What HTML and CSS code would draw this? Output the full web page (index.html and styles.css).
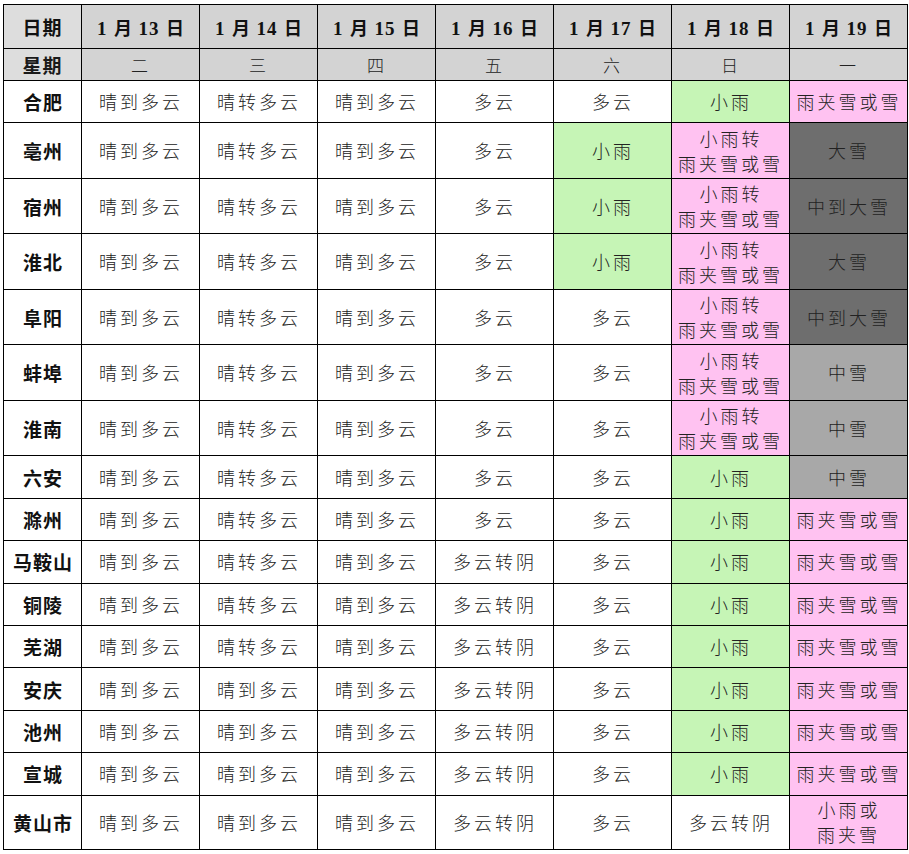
FILE: index.html
```html
<!DOCTYPE html>
<html lang="zh">
<head>
<meta charset="utf-8">
<link rel="stylesheet" href="styles.css">
</head>
<body>
<table class="wx">
  <colgroup>
    <col class="c-city">
    <col><col><col><col><col><col><col>
  </colgroup>
  <thead>
    <tr class="r-date">
      <th class="lbl">日期</th>
      <th><span class="n">1</span> 月 <span class="n">13</span> 日</th>
      <th><span class="n">1</span> 月 <span class="n">14</span> 日</th>
      <th><span class="n">1</span> 月 <span class="n">15</span> 日</th>
      <th><span class="n">1</span> 月 <span class="n">16</span> 日</th>
      <th><span class="n">1</span> 月 <span class="n">17</span> 日</th>
      <th><span class="n">1</span> 月 <span class="n">18</span> 日</th>
      <th><span class="n">1</span> 月 <span class="n">19</span> 日</th>
    </tr>
    <tr class="r-week">
      <th class="lbl">星期</th>
      <td>二</td><td>三</td><td>四</td><td>五</td><td>六</td><td>日</td><td>一</td>
    </tr>
  </thead>
  <tbody>
    <tr class="s"><th>合肥</th><td>晴到多云</td><td>晴转多云</td><td>晴到多云</td><td>多云</td><td>多云</td><td class="g">小雨</td><td class="p">雨夹雪或雪</td></tr>
    <tr class="d"><th>亳州</th><td>晴到多云</td><td>晴转多云</td><td>晴到多云</td><td>多云</td><td class="g">小雨</td><td class="p">小雨转<br>雨夹雪或雪</td><td class="dk">大雪</td></tr>
    <tr class="d"><th>宿州</th><td>晴到多云</td><td>晴转多云</td><td>晴到多云</td><td>多云</td><td class="g">小雨</td><td class="p">小雨转<br>雨夹雪或雪</td><td class="dk">中到大雪</td></tr>
    <tr class="d"><th>淮北</th><td>晴到多云</td><td>晴转多云</td><td>晴到多云</td><td>多云</td><td class="g">小雨</td><td class="p">小雨转<br>雨夹雪或雪</td><td class="dk">大雪</td></tr>
    <tr class="d"><th>阜阳</th><td>晴到多云</td><td>晴转多云</td><td>晴到多云</td><td>多云</td><td>多云</td><td class="p">小雨转<br>雨夹雪或雪</td><td class="dk">中到大雪</td></tr>
    <tr class="d"><th>蚌埠</th><td>晴到多云</td><td>晴转多云</td><td>晴到多云</td><td>多云</td><td>多云</td><td class="p">小雨转<br>雨夹雪或雪</td><td class="md">中雪</td></tr>
    <tr class="d"><th>淮南</th><td>晴到多云</td><td>晴转多云</td><td>晴到多云</td><td>多云</td><td>多云</td><td class="p">小雨转<br>雨夹雪或雪</td><td class="md">中雪</td></tr>
    <tr class="s"><th>六安</th><td>晴到多云</td><td>晴转多云</td><td>晴到多云</td><td>多云</td><td>多云</td><td class="g">小雨</td><td class="md">中雪</td></tr>
    <tr class="s"><th>滁州</th><td>晴到多云</td><td>晴转多云</td><td>晴到多云</td><td>多云</td><td>多云</td><td class="g">小雨</td><td class="p">雨夹雪或雪</td></tr>
    <tr class="s"><th>马鞍山</th><td>晴到多云</td><td>晴转多云</td><td>晴到多云</td><td>多云转阴</td><td>多云</td><td class="g">小雨</td><td class="p">雨夹雪或雪</td></tr>
    <tr class="s"><th>铜陵</th><td>晴到多云</td><td>晴转多云</td><td>晴到多云</td><td>多云转阴</td><td>多云</td><td class="g">小雨</td><td class="p">雨夹雪或雪</td></tr>
    <tr class="s"><th>芜湖</th><td>晴到多云</td><td>晴转多云</td><td>晴到多云</td><td>多云转阴</td><td>多云</td><td class="g">小雨</td><td class="p">雨夹雪或雪</td></tr>
    <tr class="s"><th>安庆</th><td>晴到多云</td><td>晴到多云</td><td>晴到多云</td><td>多云转阴</td><td>多云</td><td class="g">小雨</td><td class="p">雨夹雪或雪</td></tr>
    <tr class="s"><th>池州</th><td>晴到多云</td><td>晴到多云</td><td>晴到多云</td><td>多云转阴</td><td>多云</td><td class="g">小雨</td><td class="p">雨夹雪或雪</td></tr>
    <tr class="s"><th>宣城</th><td>晴到多云</td><td>晴到多云</td><td>晴到多云</td><td>多云转阴</td><td>多云</td><td class="g">小雨</td><td class="p">雨夹雪或雪</td></tr>
    <tr class="l"><th>黄山市</th><td>晴到多云</td><td>晴到多云</td><td>晴到多云</td><td>多云转阴</td><td>多云</td><td>多云转阴</td><td class="p">小雨或<br>雨夹雪</td></tr>
  </tbody>
</table>
</body>
</html>
```

FILE: styles.css
```css
html, body {
  margin: 0;
  padding: 0;
  background: #ffffff;
}

body {
  padding: 4px 0 0 3px;
  font-family: "Noto Sans CJK SC", "Noto Sans", sans-serif;
  color: #1a1a1a;
}

.wx {
  border-collapse: collapse;
  table-layout: fixed;
  width: 903px;
}

.wx col { width: 118px; }
.wx col.c-city { width: 78px; }

.wx th,
.wx td {
  border: 1px solid #000;
  padding: 0;
  text-align: center;
  vertical-align: middle;
  overflow: hidden;
  white-space: nowrap;
}

.wx td {
  font-size: 18px;
  font-weight: 300;
  letter-spacing: 3px;
  text-indent: 1px;
  line-height: 25px;
  color: #222;
}

.wx tbody th {
  font-size: 19px;
  font-weight: 700;
  letter-spacing: 1px;
  text-indent: 1px;
  color: #111;
}

.r-date { height: 44px; }
.r-week { height: 32px; }

.r-date th {
  background: #d3d3d3;
  font-family: "Liberation Serif", "Noto Sans CJK SC", serif;
  font-size: 18px;
  font-weight: 700;
  word-spacing: 2px;
  color: #111;
}

.r-date th .n {
  font-family: "Liberation Serif", serif;
  font-size: 19px;
  letter-spacing: 1px;
}

.r-week td {
  background: #d3d3d3;
  font-size: 17px;
  line-height: 20px;
}

.wx thead th.lbl {
  background: #dddddd;
  font-family: "Noto Sans CJK SC", sans-serif;
  font-size: 19px;
  font-weight: 700;
  letter-spacing: 1px;
  word-spacing: 0;
}

.s { height: 42.4px; }
.d { height: 55.5px; }
.l { height: 54px; }

.g { background: #c6f5b6; }
.p { background: #ffc2f1; }
.dk { background: #6e6e6e; color: #2a2a2a; }
.md { background: #a8a8a8; color: #2a2a2a; }
```
